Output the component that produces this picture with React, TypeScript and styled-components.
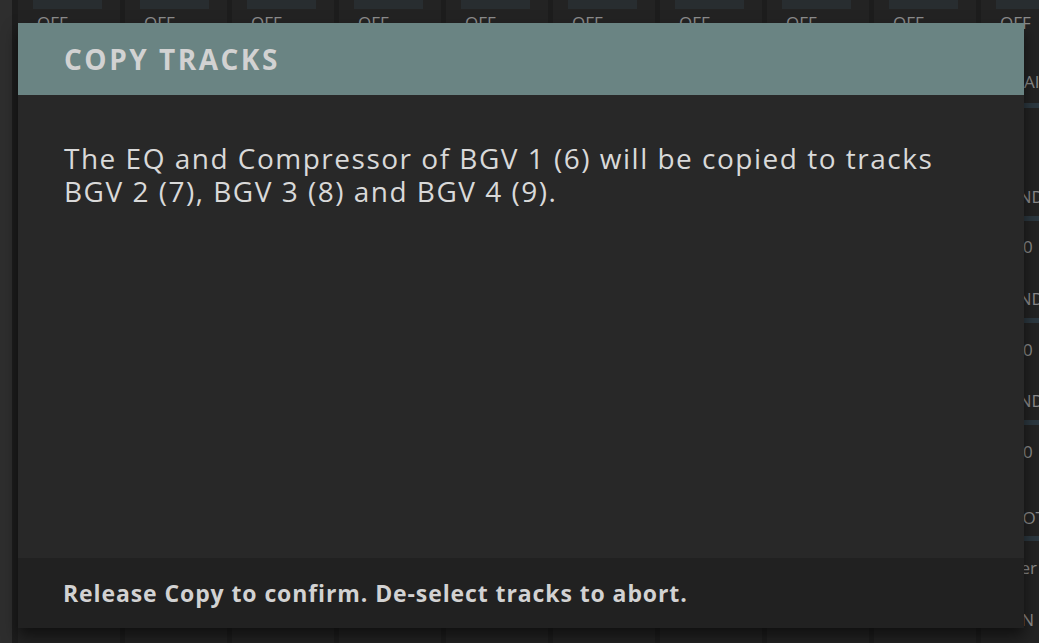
import React from "react";
import styled, { createGlobalStyle } from "styled-components";

const Global = createGlobalStyle`
  html, body { margin: 0; padding: 0; background: #1f1f1f; overflow: hidden; }
  #root { width: 1039px; height: 643px; }
`;

const Screen = styled.div`
  position: relative;
  width: 1039px;
  height: 643px;
  display: flex;
  background: #202020;
  overflow: hidden;
  font-family: "Open Sans", "Noto Sans", sans-serif;
`;

const SidePanel = styled.div`
  width: 12px;
  flex: none;
  background: #2e2e2e;
`;

const Mixer = styled.div`
  display: flex;
  gap: 5px;
  padding-left: 6px;
  background: #1d1d1d;
  flex: 1;
`;

const Strip = styled.div`
  width: 102px;
  flex: none;
  background: #232323;
  display: flex;
  flex-direction: column;
  color: #8c8c8c;
  font-size: 17px;
`;

const TopBox = styled.div`
  margin-left: 15px;
  width: 69px;
  height: 9px;
  background: #282d30;
`;

const Label = styled.div<{
  $top: number;
  $align?: "left" | "center";
  $pad?: number;
  $padRight?: number;
}>`
  margin-top: ${(p) => p.$top}px;
  padding-left: ${(p) => p.$pad ?? 0}px;
  padding-right: ${(p) => p.$padRight ?? 0}px;
  text-align: ${(p) => p.$align ?? "center"};
  height: 20px;
  line-height: 20px;
  white-space: nowrap;
`;

const Bar = styled.div<{ $top: number }>`
  margin-top: ${(p) => p.$top}px;
  margin-left: 15px;
  width: 72px;
  height: 5px;
  background: #2c3840;
`;

const Dialog = styled.div`
  position: absolute;
  left: 18px;
  top: 23px;
  width: 1006px;
  height: 605px;
  display: flex;
  flex-direction: column;
  background: #282828;
  box-shadow: 0 8px 14px rgba(0, 0, 0, 0.55);
`;

const Header = styled.div`
  height: 72px;
  flex: none;
  background: #6a8483;
  display: flex;
  align-items: center;
  padding-left: 46px;
  color: #d2d2d2;
  font-size: 28px;
  font-weight: 700;
  letter-spacing: 2.5px;
`;

const Body = styled.div`
  flex: 1;
  padding: 47px 46px 0;
  color: #d9d9d9;
  font-size: 28px;
  line-height: 33px;
  letter-spacing: 1.5px;
`;

const Footer = styled.div`
  height: 70px;
  flex: none;
  background: #212121;
  display: flex;
  align-items: center;
  padding-left: 45px;
  color: #d2d2d2;
  font-size: 23px;
  font-weight: 700;
  letter-spacing: 0.9px;
`;

const strips = Array.from({ length: 10 });

export default function App() {
  return (
    <>
      <Global />
      <Screen>
        <SidePanel />
        <Mixer>
          {strips.map((_, i) => (
            <Strip key={i}>
              <TopBox />
              <Label $top={4} $align="left" $pad={19}>OFF</Label>
              <Label $top={39}>GAIN</Label>
              <Bar $top={11} />
              <Label $top={79} $padRight={20}>SEND</Label>
              <Bar $top={9} />
              <Label $top={16} $align="left" $pad={42}>0</Label>
              <Label $top={32} $padRight={20}>SEND</Label>
              <Bar $top={9} />
              <Label $top={17} $align="left" $pad={42}>0</Label>
              <Label $top={31} $padRight={20}>SEND</Label>
              <Bar $top={9} />
              <Label $top={17} $align="left" $pad={42}>0</Label>
              <Label $top={46}>NOTE</Label>
              <Bar $top={8} />
              <Label $top={17} $align="left" $pad={19}>User</Label>
              <Label $top={32} $padRight={22}>ON</Label>
            </Strip>
          ))}
        </Mixer>
        <Dialog>
          <Header>COPY TRACKS</Header>
          <Body>
            The EQ and Compressor of BGV 1 (6) will be copied to tracks
            <br />
            BGV 2 (7), BGV 3 (8) and BGV 4 (9).
          </Body>
          <Footer>Release Copy to confirm. De-select tracks to abort.</Footer>
        </Dialog>
      </Screen>
    </>
  );
}
